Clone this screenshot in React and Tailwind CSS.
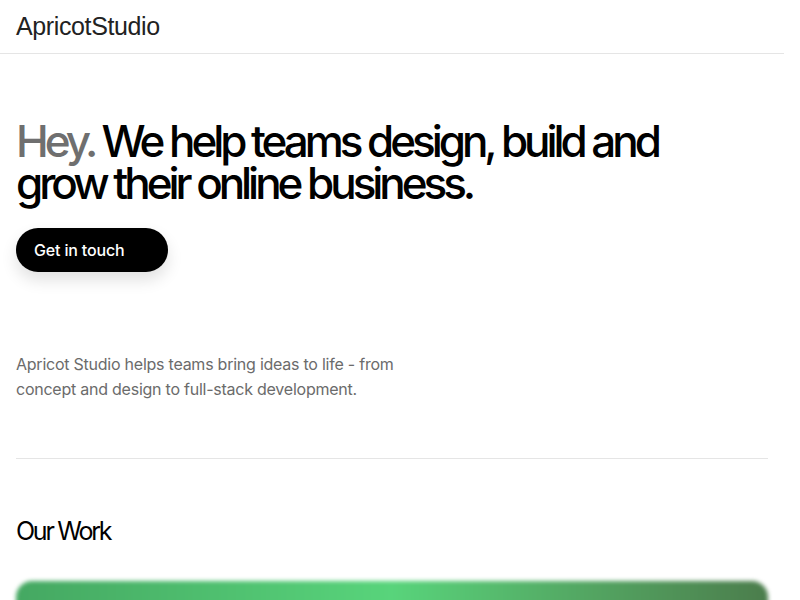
import React from 'react';

const projects = [
  { name: 'Greenline', tone: 'from-[#45a862] via-[#58d47b] to-[#4b7d4c]' },
  { name: 'Harbor', tone: 'from-[#3b6fb0] via-[#5a9be0] to-[#2d4f7c]' },
  { name: 'Ember', tone: 'from-[#c0602f] via-[#f08a4b] to-[#7a3a1d]' },
  { name: 'Lumen', tone: 'from-[#8a6bc4] via-[#b394ec] to-[#4f3a7a]' },
];

const App = () => {
  return (
    <div className="h-screen w-[784px] overflow-y-scroll bg-white text-black font-['Inter',sans-serif]">
      <header className="h-[54px] border-b border-[#e5e5e5] px-4 flex items-center">
        <span className="text-[25px] font-['Liberation_Sans',Arial,sans-serif] font-light text-[#222] tracking-[-0.015em]">
          ApricotStudio
        </span>
      </header>

      <main className="px-4">
        <section className="pt-[66px]">
          <h1 className="text-[44px] leading-[42px] font-medium tracking-[-0.092em] max-w-[680px]">
            <span className="text-[#6f6f6f]">Hey.</span> We help teams design, build and grow their online business.
          </h1>
          <button className="mt-[24px] h-[44px] w-[152px] rounded-full bg-black text-white text-[16px] font-medium text-left pl-[18px] tracking-[-0.01em] shadow-[0_8px_16px_rgba(0,0,0,0.12)]">
            Get in touch
          </button>
        </section>

        <p className="mt-[80px] max-w-[420px] text-[16px] leading-[25px] text-[#6b6b6b] tracking-[-0.015em]">
          Apricot Studio helps teams bring ideas to life - from concept and design to full-stack development.
        </p>

        <div className="mt-[56px] border-t border-[#e5e5e5]" />

        <section className="pt-[56px]">
          <h2 className="text-[25px] font-normal tracking-[-0.09em] leading-[32px]">Our Work</h2>
          <div className="mt-[34px] flex flex-col gap-10 pb-20">
            {projects.map((p) => (
              <div key={p.name} className="flex flex-col gap-3">
                <div className={`h-[900px] rounded-2xl bg-gradient-to-r ${p.tone} blur-[2px]`} />
                <span className="text-[18px] font-medium tracking-[-0.03em]">{p.name}</span>
              </div>
            ))}
          </div>
        </section>

        <footer className="border-t border-[#e5e5e5] py-10 text-[14px] text-[#6b6b6b]">
          © Apricot Studio
        </footer>
      </main>
    </div>
  );
};

export default App;
